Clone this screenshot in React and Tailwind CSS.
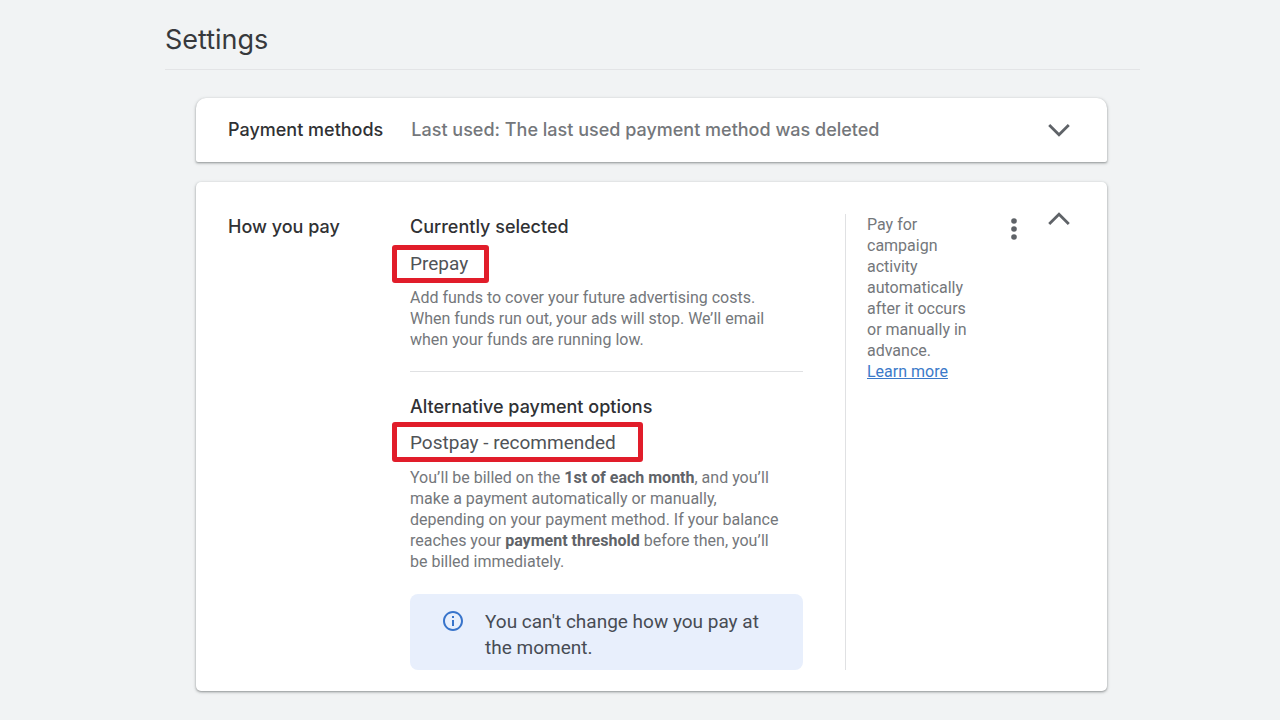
import React from 'react';

const cardShadow = 'bg-white shadow-[0_1px_3px_1px_rgba(60,64,67,0.15),0_1px_2px_0_rgba(60,64,67,0.4)]';
const heading = "font-['Inter',sans-serif] text-lg leading-[26px] font-medium text-[#303134]";
const body = 'text-base leading-[21px] text-[#74777b]';
const highlight = '-ml-[18px] w-fit rounded-[3px] border-[5px] border-[#e11d2a] pl-[13px] text-[19px] leading-[26px] text-[#505357]';

function Chevron({ up = false }) {
  return (
    <svg width="24" height="24" viewBox="0 0 24 24" fill="none" stroke="#5f6368" strokeWidth="2.8" aria-hidden="true">
      <path d={up ? 'M2.2 17 12 7.2 21.8 17' : 'M2.2 7 12 16.8 21.8 7'} />
    </svg>
  );
}

function PaymentMethods() {
  return (
    <section className={`${cardShadow} flex items-center rounded-t-[10px] rounded-b-xs px-8 py-[19px]`}>
      <h2 className={heading}>Payment methods</h2>
      <p className="ml-7 flex-1 font-['Inter',sans-serif] text-lg leading-[26px] font-medium text-[#74777b]">
        Last used: The last used payment method was deleted
      </p>
      <button type="button" aria-label="Expand payment methods" className="mr-1">
        <Chevron />
      </button>
    </section>
  );
}

function HowYouPay() {
  return (
    <section className={`${cardShadow} mt-5 flex items-stretch rounded-[5px] px-8 pt-8 pb-[21px]`}>
      <h2 className={`${heading} w-[182px] shrink-0`}>How you pay</h2>

      <div className="min-w-0 flex-1">
        <h3 className={heading}>Currently selected</h3>
        <p className={`${highlight} mt-[5px] py-px pr-4`}>Prepay</p>
        <p className={`${body} mt-1 pr-4`}>
          Add funds to cover your future advertising costs. When funds run out, your ads will stop. We’ll email when your funds are running low.
        </p>
        <hr className="mt-[21px] border-[#e0e1e3]" />

        <h3 className={`${heading} mt-[22px]`}>Alternative payment options</h3>
        <p className={`${highlight} mt-[2px] pt-[3px] pr-[22px] pb-px`}>Postpay - recommended</p>
        <p className={`${body} mt-[5px] pr-4`}>
          You’ll be billed on the <strong className="font-bold text-[#5f6368]">1st of each month</strong>, and you’ll make a payment automatically or manually, depending on your payment method. If your balance reaches your{' '}
          <strong className="font-bold text-[#5f6368]">payment threshold</strong> before then, you’ll be billed immediately.
        </p>

        <div className="mt-[22px] flex gap-5 rounded-lg bg-[#e8effc] pt-[15px] pr-8 pb-[9px] pl-[31px]">
          <svg className="shrink-0" width="24" height="24" viewBox="0 0 24 24" fill="#3874cb" aria-hidden="true">
            <path d="M11 7h2v2h-2zm0 4h2v6h-2zm1-9C6.48 2 2 6.48 2 12s4.48 10 10 10 10-4.48 10-10S17.52 2 12 2zm0 18c-4.41 0-8-3.59-8-8s3.59-8 8-8 8 3.59 8 8-3.59 8-8 8z" />
          </svg>
          <p className="text-[19px] leading-[26px] text-[#474c54]">You can't change how you pay at the moment.</p>
        </div>
      </div>

      <aside className="ml-[42px] w-[142px] shrink-0 border-l border-[#e0e1e3] pr-3 pl-[21px]">
        <p className={body}>
          Pay for campaign activity automatically after it occurs or manually in advance.
        </p>
        <a href="#learn-more" className="block text-base leading-[21px] text-[#3b7ac9] underline">
          Learn more
        </a>
      </aside>

      <div className="ml-[15px] flex items-start gap-[21px] pr-1">
        <button type="button" aria-label="More options" className="mt-[3px]">
          <svg width="24" height="24" viewBox="0 0 24 24" fill="#5f6368" aria-hidden="true">
            <circle cx="12" cy="4" r="2.8" />
            <circle cx="12" cy="12" r="2.8" />
            <circle cx="12" cy="20" r="2.8" />
          </svg>
        </button>
        <button type="button" aria-label="Collapse how you pay" className="-mt-[7px]">
          <Chevron up />
        </button>
      </div>
    </section>
  );
}

export default function App() {
  return (
    <main className="min-h-screen bg-[#f1f3f4] pt-5 pr-[140px] pb-7 pl-[165px] font-['Roboto',sans-serif]">
      <h1 className="border-b border-[#e3e4e6] pb-[9px] font-['Inter',sans-serif] text-[27px] leading-10 text-[#37393c]">Settings</h1>
      <div className="mt-7 mr-[33px] ml-[31px]">
        <PaymentMethods />
        <HowYouPay />
      </div>
    </main>
  );
}
